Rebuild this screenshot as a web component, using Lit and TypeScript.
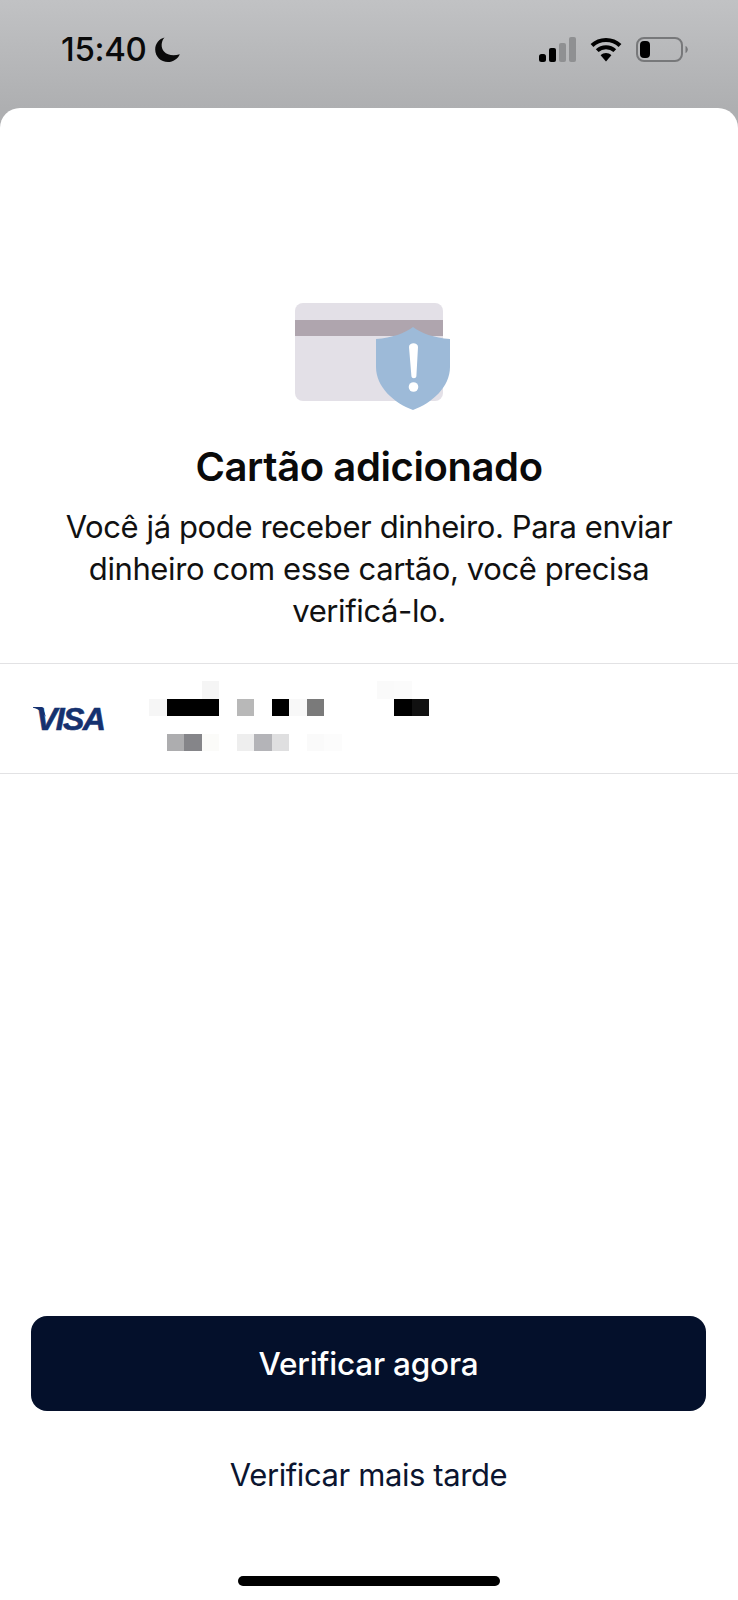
import { LitElement, html, css, svg } from 'lit';
import { customElement } from 'lit/decorators.js';

// mosaic of the blurred card details, one colour per cell, '' = white
const MOSAIC: string[][] = [
  ['', '', '', '#f5f5f5', '', '', '', '', '', '', '', '', '', '#fafafa', '#fbfbfb', '', ''],
  ['#f6f6f6', '#000', '#000', '#000', '', '#b8b8b8', '', '#000', '#f8f8f8', '#7a7a7a', '', '', '', '', '#000', '#111', ''],
  ['', '', '', '', '', '', '', '', '', '', '', '', '', '', '', '', ''],
  ['', '#adadaf', '#858589', '#fbfbf9', '', '#eeeeee', '#b4b4b8', '#dfdfe0', '', '#fafafa', '#fcfcfc', '', '', '', '', '', ''],
];

@customElement('app-root')
export class AppRoot extends LitElement {
  static styles = css`
    :host {
      display: block;
      height: 1600px;
      font-family: Inter, "Noto Sans", sans-serif;
      background: linear-gradient(180deg, #c1c2c4 0%, #aeafb1 108px);
      overflow: hidden;
    }
    .status {
      height: 108px;
      box-sizing: border-box;
      padding: 37px 50px 0 61px;
      display: flex;
      align-items: flex-start;
      color: #000;
    }
    .time {
      font-size: 33px;
      line-height: 25px;
      font-weight: 500;
      letter-spacing: -0.3px;
      color: #0a0a0a;
    }
    .moon { margin-left: 8px; }
    .right {
      margin-left: auto;
      display: flex;
      gap: 14px;
    }
    .sheet {
      height: 1492px;
      background: #fff;
      border-radius: 20px 20px 0 0;
      display: flex;
      flex-direction: column;
    }
    .art {
      width: 148px;
      height: 108px;
      margin: 195px auto 0;
    }
    .art svg { display: block; overflow: visible; }
    h1 {
      margin: 32px 0 0;
      font-size: 40px;
      line-height: 48px;
      font-weight: 600;
      text-align: center;
      color: #0a0a0a;
      letter-spacing: -0.4px;
    }
    p {
      margin: 15px 0 0;
      padding: 0 40px;
      font-size: 31px;
      line-height: 42px;
      font-weight: 400;
      text-align: center;
      color: #111;
      letter-spacing: -0.4px;
    }
    .row {
      margin-top: 31px;
      height: 111px;
      box-sizing: border-box;
      border-top: 1px solid #e2e2e4;
      border-bottom: 1px solid #e2e2e4;
      padding: 17px 0 0 33px;
      display: flex;
      align-items: flex-start;
    }
    .visa {
      width: 116px;
      margin-top: 22px;
      position: relative;
      font-family: "Liberation Sans", Arial, sans-serif;
      font-size: 32px;
      line-height: 32px;
      font-weight: 700;
      font-style: italic;
      letter-spacing: -1.6px;
      color: #15316f;
      -webkit-text-stroke: 0.6px #15316f;
    }
    .visa span { margin-left: 3px; }
    .visa svg {
      position: absolute;
      left: 0;
      top: 4px;
    }
    .mosaic {
      display: grid;
      grid-template-columns: repeat(17, 17.5px);
      grid-auto-rows: 17.5px;
    }
    .footer {
      margin-top: auto;
      padding: 0 32px 0 31px;
      display: flex;
      flex-direction: column;
      align-items: stretch;
    }
    .primary {
      height: 95px;
      display: flex;
      align-items: center;
      justify-content: center;
      background: #04102b;
      color: #fff;
      border-radius: 16px;
      font-size: 31.5px;
      font-weight: 500;
      letter-spacing: -0.2px;
    }
    .secondary {
      margin-top: 43px;
      height: 40px;
      display: flex;
      align-items: center;
      justify-content: center;
      color: #0b1530;
      font-size: 31px;
      letter-spacing: -0.4px;
    }
    .home {
      width: 262px;
      height: 10px;
      margin: 82px auto 14px;
      border-radius: 5px;
      background: #000;
    }
  `;

  private moon() {
    return html`<svg class="moon" width="25" height="25" viewBox="0 0 25 25">
      <path fill="#0a0a0a" d="M9.5 0.5C6 4.5 5.6 10.8 9 14.6 12.4 18.4 18.8 19.4 24.8 17.2 22.8 21.8 18.2 25 13 25 5.8 25 0.2 19.4 0.2 12.4 0.2 6.8 4.2 1.8 9.5 0.5Z"/>
    </svg>`;
  }

  private signal() {
    return html`<svg width="37" height="25" viewBox="0 0 37 25">
      <rect x="0" y="17" width="7" height="8" rx="2.5" fill="#000"/>
      <rect x="10" y="11" width="7" height="14" rx="2" fill="#000"/>
      <rect x="20" y="6" width="7" height="19" rx="2" fill="#8f9092"/>
      <rect x="30" y="0" width="7" height="25" rx="2" fill="#8f9092"/>
    </svg>`;
  }

  private wifi() {
    return html`<svg width="32" height="25" viewBox="0 0 32 25">
      <path fill="none" stroke="#000" stroke-width="4" d="M2 8.5C9.6 1 22.4 1 30 8.5"/>
      <path fill="none" stroke="#000" stroke-width="4" d="M7.2 13.6C12 9 20 9 24.8 13.6"/>
      <path fill="#000" d="M10.6 18.2C13.6 15.2 18.4 15.2 21.4 18.2L16 24.6Z"/>
    </svg>`;
  }

  private battery() {
    return html`<svg width="52" height="25" viewBox="0 0 52 25">
      <rect x="1" y="1" width="45" height="23" rx="7" fill="none" stroke="#77787a" stroke-width="2"/>
      <rect x="4" y="4" width="10" height="17" rx="4" fill="#000"/>
      <path fill="#77787a" d="M49.5 9C51 9.6 51.8 11 51.8 12.5 51.8 14 51 15.4 49.5 16Z"/>
    </svg>`;
  }

  private shieldCard() {
    return svg`
      <rect x="0" y="0" width="148" height="98" rx="8" fill="#e3e0e7"/>
      <rect x="0" y="17" width="148" height="16" fill="#afa5ae"/>
      <path fill="#9dbad8" d="M118 24C126 30 139 35 155 36V64C155 84 137 100 118 107 99 100 81 84 81 64V36C97 35 110 30 118 24Z"/>
      <path fill="#fff" d="M114 44C114 39 123 39 123 44L121.4 73C121.2 76 116.6 76 116.4 73Z"/>
      <circle cx="118.5" cy="84" r="4.8" fill="#fff"/>
    `;
  }

  render() {
    return html`
      <div class="status">
        <span class="time">15:40</span>
        ${this.moon()}
        <div class="right">${this.signal()}${this.wifi()}${this.battery()}</div>
      </div>
      <div class="sheet">
        <div class="art">
          <svg width="148" height="108" viewBox="0 0 148 108">${this.shieldCard()}</svg>
        </div>
        <h1>Cartão adicionado</h1>
        <p>Você já pode receber dinheiro. Para enviar dinheiro com esse cartão, você precisa verificá-lo.</p>
        <div class="row">
          <div class="visa">
            <svg width="14" height="12" viewBox="0 0 14 12"><path fill="#15316f" d="M0 0H9.5L13 10C10 5.5 5.5 2 0 0.8Z"/></svg>
            <span>VISA</span>
          </div>
          <div class="mosaic">
            ${MOSAIC.flat().map((c) => html`<span style="background:${c || 'transparent'}"></span>`)}
          </div>
        </div>
        <div class="footer">
          <div class="primary">Verificar agora</div>
          <div class="secondary">Verificar mais tarde</div>
        </div>
        <div class="home"></div>
      </div>
    `;
  }
}
